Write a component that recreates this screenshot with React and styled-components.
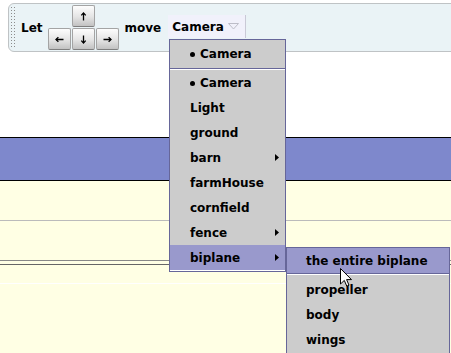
import React from 'react';
import styled, { createGlobalStyle } from 'styled-components';

const Global = createGlobalStyle`
  html, body { margin: 0; padding: 0; background: #fff; overflow: hidden; }
  body {
    font-family: "DejaVu Sans", "Liberation Sans", sans-serif;
    font-weight: bold;
    font-size: 12px;
    color: #000;
  }
`;

const Page = styled.div`
  position: relative;
  width: 451px;
  height: 353px;
  overflow: hidden;
  padding-top: 3px;
  box-sizing: border-box;
`;

const Toolbar = styled.div`
  margin-left: 8px;
  width: 470px;
  height: 49px;
  box-sizing: border-box;
  border: 1px solid #bfc3c5;
  border-radius: 6px;
  background: #eaf3f6;
  display: flex;
  align-items: center;
`;

const Grip = styled.div`
  width: 5px;
  height: 43px;
  margin-left: 1px;
  margin-right: 6px;
  background-image: radial-gradient(circle, #8c8c8c 0.7px, transparent 1px);
  background-size: 3px 3px;
`;

const Label = styled.span`
  line-height: 14px;
  margin-right: ${p => p.$gap || 0}px;
`;

const ArrowPad = styled.div`
  display: grid;
  grid-template-columns: repeat(3, 23px);
  grid-template-rows: repeat(2, 22px);
  gap: 1px;
  margin-right: 6px;
`;

const Key = styled.div`
  grid-column: ${p => p.$col};
  grid-row: ${p => p.$row};
  box-sizing: border-box;
  border: 1px solid #a4a4a4;
  border-bottom-color: #7f7f7f;
  border-radius: 2px;
  background: linear-gradient(#fdfdfd, #e4e4e4 55%, #c2c2c2);
  display: flex;
  align-items: center;
  justify-content: center;
`;

const Dropdown = styled.div`
  margin-left: 1px;
  margin-bottom: 2px;
  width: 78px;
  height: 23px;
  box-sizing: border-box;
  background: #f1f1fb;
  border-right: 1px solid #c9c9d6;
  display: flex;
  align-items: center;
  padding-left: 4px;
  gap: 4px;
`;

const Band = styled.div`
  margin-top: 85px;
  height: 42px;
  background: #7e88cc;
  border-top: 1px solid #000;
  border-bottom: 1px solid #000;
`;

const Yellow = styled.div`
  background: #ffffe4;
  height: 200px;
  display: flex;
  flex-direction: column;
`;

const Row = styled.div`
  height: ${p => p.$h}px;
  border-bottom: 1px solid ${p => p.$line};
  flex: none;
`;

const Menu = styled.div`
  position: absolute;
  left: ${p => p.$x}px;
  top: ${p => p.$y}px;
  width: ${p => p.$w}px;
  box-sizing: border-box;
  border: 1px solid #666699;
  background: #cccccc;
  display: flex;
  flex-direction: column;
`;

const Item = styled.div`
  height: ${p => p.$h || 25}px;
  display: flex;
  align-items: center;
  padding-left: ${p => p.$pad || 20}px;
  background: ${p => (p.$active ? '#9999cc' : 'transparent')};
  flex: none;
`;

const Sep = styled.div`
  height: 0;
  border-top: 1px solid #666699;
  border-bottom: 1px solid #ffffff;
  flex: none;
`;

const Bottom = styled.div`
  height: 1px;
  background: #ffffff;
  flex: none;
`;

const Items = styled.div`
  padding-top: ${p => p.$top || 0}px;
  padding-bottom: ${p => p.$bottom || 0}px;
  display: flex;
  flex-direction: column;
`;

const Bullet = styled.span`
  width: 5px;
  height: 5px;
  border-radius: 50%;
  background: #000;
  margin-right: 5px;
  margin-top: 1px;
`;

const Chevron = styled.svg`
  margin-left: auto;
  margin-right: 6px;
`;

const Cursor = styled.svg`
  position: absolute;
  left: ${p => p.$x}px;
  top: ${p => p.$y}px;
`;

const Arrow = ({ dir }) => {
  const rot = { up: 0, right: 90, down: 180, left: 270 }[dir];
  return (
    <svg width="9" height="9" viewBox="0 0 9 9" style={{ transform: `rotate(${rot}deg)` }}>
      <path d="M4.5 1 V8.5" stroke="#000" strokeWidth="1.3" />
      <path d="M2.3 3.4 L4.5 1 L6.7 3.4" stroke="#000" strokeWidth="1.3" fill="none" />
    </svg>
  );
};

const Tri = () => (
  <Chevron width="4" height="7" viewBox="0 0 4 7">
    <path d="M0 0 L4 3.5 L0 7 Z" fill="#000" />
  </Chevron>
);

const items = [
  { t: 'Camera', bullet: true },
  { t: 'Light' },
  { t: 'ground' },
  { t: 'barn', sub: true },
  { t: 'farmHouse' },
  { t: 'cornfield' },
  { t: 'fence', sub: true },
  { t: 'biplane', sub: true, active: true },
];

const subItems = ['propeller', 'body', 'wings'];

export default function App() {
  return (
    <>
      <Global />
      <Page>
        <Toolbar>
          <Grip />
          <Label $gap={5}>Let</Label>
          <ArrowPad>
            <Key $col={2} $row={1}><Arrow dir="up" /></Key>
            <Key $col={1} $row={2}><Arrow dir="left" /></Key>
            <Key $col={2} $row={2}><Arrow dir="down" /></Key>
            <Key $col={3} $row={2}><Arrow dir="right" /></Key>
          </ArrowPad>
          <Label $gap={6}>move</Label>
          <Dropdown>
            <span>Camera</span>
            <svg width="11" height="7" viewBox="0 0 11 7">
              <path d="M0.5 0.5 H10.5 L5.5 6 Z" fill="none" stroke="#bdbdc8" strokeWidth="1" />
            </svg>
          </Dropdown>
        </Toolbar>
        <Band />
        <Yellow>
          <Row $h={39} $line="#bbbbbb" />
          <Row $h={39} $line="#888888" />
          <Row $h={3} $line="#666666" />
          <Row $h={18} $line="#ffffff" />
        </Yellow>

        <Menu $x={169} $y={39} $w={117}>
          <Item $h={28}><Bullet />Camera</Item>
          <Sep />
          <Items>
            {items.map(it => (
              <Item key={it.t} $active={it.active}>
                {it.bullet && <Bullet />}
                {it.t}
                {it.sub && <Tri />}
              </Item>
            ))}
          </Items>
          <Bottom />
        </Menu>

        <Menu $x={286} $y={247} $w={164}>
          <Item $active $pad={19}>the entire biplane</Item>
          <Sep />
          <Items $top={2} $bottom={20}>
            {subItems.map(t => (
              <Item key={t} $pad={19}>{t}</Item>
            ))}
          </Items>
        </Menu>

        <Cursor $x={340} $y={268} width="12" height="19" viewBox="0 0 12 19">
          <path d="M0.5 0.5 L0.5 16 L4.3 12.4 L6.8 18.2 L9 17.2 L6.6 11.6 L11.5 11.6 Z" fill="#fff" stroke="#000" strokeWidth="1" strokeLinejoin="miter" />
        </Cursor>
      </Page>
    </>
  );
}
